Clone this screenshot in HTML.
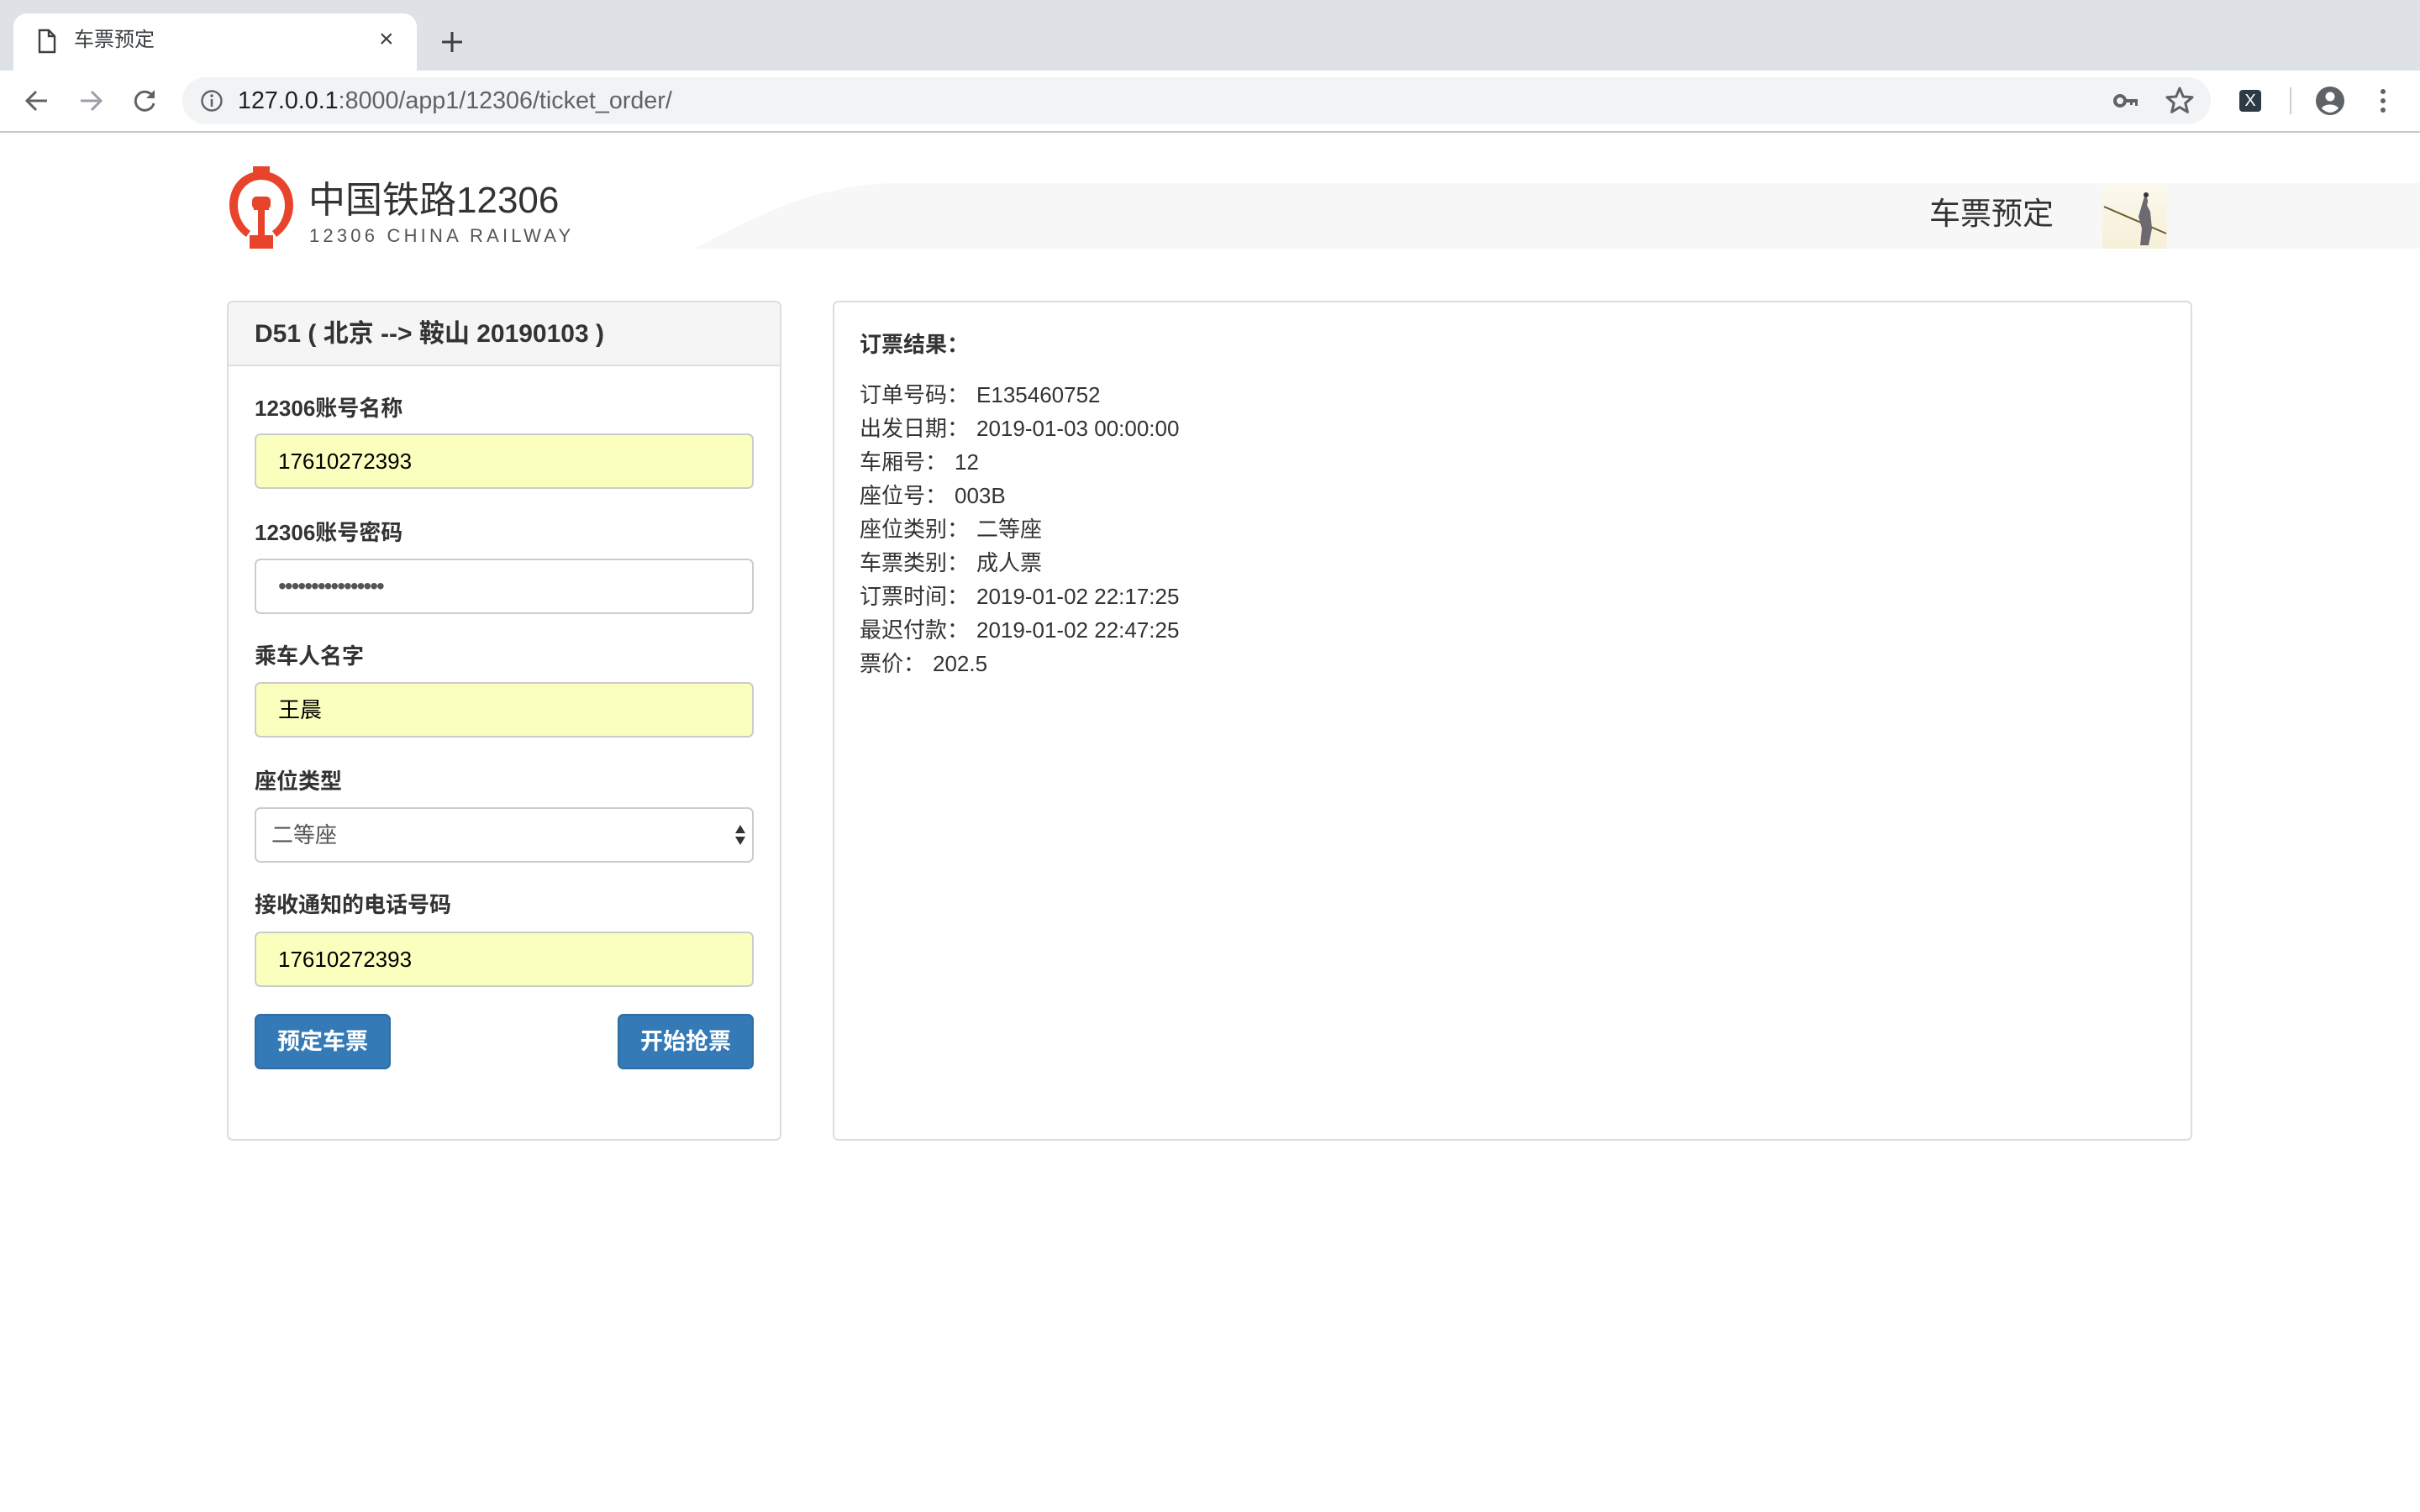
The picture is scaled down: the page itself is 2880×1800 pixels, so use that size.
<!DOCTYPE html>
<html><head><meta charset="utf-8"><style>
*{margin:0;padding:0;box-sizing:border-box}
body{width:2880px;height:1800px;background:#fff;position:relative;overflow:hidden;font-family:"Liberation Sans","Noto Sans CJK SC",sans-serif;color:#333}
.a{position:absolute}
.lbl{position:absolute;left:303px;font-size:26px;font-weight:bold;line-height:36px;color:#333}
.inp{position:absolute;left:303px;width:594px;height:66px;border:2px solid #ccc;border-radius:7px;background:#faffbd;font-size:26px;line-height:62px;padding-left:26px;color:#000}
.btn{position:absolute;top:1207px;width:162px;height:66px;background:#337ab7;border:2px solid #2e6da4;border-radius:7px;color:#fff;font-size:27px;font-weight:bold;line-height:62px;text-align:center}
.row{font-size:26px;line-height:40px;color:#333}
.row span{margin-left:9px}
</style></head><body>
<!-- tab strip -->
<div class="a" style="left:0;top:0;width:2880px;height:84px;background:#dee1e6"></div>
<div class="a" style="left:16px;top:16px;width:480px;height:70px;background:#fff;border-radius:16px 16px 0 0"></div>
<svg class="a" style="left:44px;top:34px" width="24" height="30" viewBox="0 0 24 30"><path d="M3 2h11l7 7v19H3z M14 2v7h7" fill="none" stroke="#3c4043" stroke-width="2.4"/></svg>
<div class="a" style="left:88px;top:32px;font-size:24px;color:#3c4043;line-height:32px">车票预定</div>
<div class="a" style="left:451px;top:30px;font-size:30px;color:#3c4043;line-height:34px">×</div>
<svg class="a" style="left:524px;top:36px" width="28" height="28"><path d="M14 2v24M2 14h24" stroke="#3c4043" stroke-width="3"/></svg>
<!-- toolbar -->
<div class="a" style="left:0;top:156px;width:2880px;height:2px;background:#c8c8c8"></div>
<svg class="a" style="left:28px;top:104px" width="32" height="32" viewBox="0 0 32 32"><path d="M28 16H5M15 5L4 16l11 11" fill="none" stroke="#5f6368" stroke-width="3"/></svg>
<svg class="a" style="left:92px;top:104px" width="32" height="32" viewBox="0 0 32 32"><path d="M4 16h23M17 5l11 11-11 11" fill="none" stroke="#9aa0a6" stroke-width="3"/></svg>
<svg class="a" style="left:156px;top:104px" width="32" height="32" viewBox="0 0 32 32"><path d="M26 11A11 11 0 1 0 27 19" fill="none" stroke="#5f6368" stroke-width="3"/><path d="M28 3v10H18z" fill="#5f6368"/></svg>
<div class="a" style="left:217px;top:92px;width:2414px;height:56px;background:#f1f3f4;border-radius:28px"></div>
<svg class="a" style="left:238px;top:106px" width="28" height="28" viewBox="0 0 28 28"><circle cx="14" cy="14" r="11.5" fill="none" stroke="#5f6368" stroke-width="2.4"/><path d="M14 12v9" stroke="#5f6368" stroke-width="2.6"/><circle cx="14" cy="8" r="1.7" fill="#5f6368"/></svg>
<div class="a" style="left:283px;top:101px;font-size:28.7px;line-height:38px;color:#5f6368"><span style="color:#202124">127.0.0.1</span>:8000/app1/12306/ticket_order/</div>
<svg class="a" style="left:2514px;top:106px" width="32" height="28" viewBox="0 0 32 28"><circle cx="9" cy="14" r="6" fill="none" stroke="#5f6368" stroke-width="4"/><path d="M15 12h15v8h-3v-4h-3v3h-3v-3h-6z" fill="#5f6368"/></svg>
<svg class="a" style="left:2576px;top:102px" width="36" height="34" viewBox="0 0 36 34"><path d="M18 3l4.2 10 10.8.8-8.2 7 2.6 10.6L18 25.6 8.6 31.4l2.6-10.6-8.2-7 10.8-.8z" fill="none" stroke="#5f6368" stroke-width="3" stroke-linejoin="round"/></svg>
<div class="a" style="left:2665px;top:107px;width:26px;height:26px;background:#2d3a43;border-radius:4px;color:#fff;font-size:20px;line-height:26px;text-align:center">X</div>
<div class="a" style="left:2725px;top:104px;width:2px;height:32px;background:#ccc"></div>
<svg class="a" style="left:2755px;top:102px" width="36" height="36" viewBox="0 0 36 36"><circle cx="18" cy="18" r="17" fill="#5f6368"/><circle cx="18" cy="13" r="5.5" fill="#fff"/><path d="M8 27c3-6 17-6 20 0c-3 3-7 5-10 5s-7-2-10-5z" fill="#fff"/></svg>
<svg class="a" style="left:2828px;top:104px" width="16" height="32"><circle cx="8" cy="5" r="3" fill="#5f6368"/><circle cx="8" cy="16" r="3" fill="#5f6368"/><circle cx="8" cy="27" r="3" fill="#5f6368"/></svg>
<!-- header -->
<svg class="a" style="left:0;top:218px" width="2880" height="80"><path d="M826 78C900 40 960 5 1060 0H2880V78Z" fill="#f7f7f7"/></svg>
<svg class="a" style="left:268px;top:198px" width="90" height="98" viewBox="0 0 90 98"><rect x="33" y="0" width="20" height="7" fill="#e8432b"/><path d="M43 6C20 6 5 24 5 46c0 18 10 31 20 38l5-7C20 70 15 58 15 46 15 29 27 16 43 16s28 13 28 30c0 12-5 24-15 31l5 7c10-7 20-20 20-38C81 24 66 6 43 6z" fill="#e8432b"/><path d="M34 38h18v14h-5v30h10v16H29V82h10V52h-5z" fill="#e8432b"/><rect x="32" y="36" width="22" height="15" rx="5" fill="#e8432b"/></svg>
<div class="a" style="left:367px;top:212px;font-size:44px;line-height:54px;color:#333">中国铁路12306</div>
<div class="a" style="left:368px;top:268px;font-size:22px;line-height:26px;color:#555;letter-spacing:4.2px">12306 CHINA RAILWAY</div>
<div class="a" style="left:2296px;top:232px;font-size:37px;line-height:46px;color:#333">车票预定</div>
<div class="a" style="left:2502px;top:218px;width:77px;height:78px;background:linear-gradient(180deg,#fbf8ee,#f6f0d8)"></div>
<svg class="a" style="left:2502px;top:218px" width="77" height="78" viewBox="0 0 77 78"><path d="M2 28L76 60" stroke="#6b5a2a" stroke-width="2"/><path d="M50 16c4 0 5 6 3 10l4 8 2 20-4 20h-10l2-20-4-14 4-14z" fill="#6c6a70"/><circle cx="52" cy="14" r="3" fill="#333"/></svg>
<!-- left panel -->
<div class="a" style="left:270px;top:358px;width:660px;height:1000px;border:2px solid #ddd;border-radius:7px"></div>
<div class="a" style="left:272px;top:360px;width:656px;height:76px;background:#f5f5f5;border-bottom:2px solid #ddd;border-radius:5px 5px 0 0"></div>
<div class="a" style="left:303px;top:378px;font-size:30px;font-weight:bold;line-height:40px;color:#333">D51 ( 北京 --&gt; 鞍山 20190103 )</div>
<div class="lbl" style="top:468px">12306账号名称</div>
<div class="inp" style="top:516px">17610272393</div>
<div class="lbl" style="top:616px">12306账号密码</div>
<div class="inp" style="top:665px;background:#fff;color:#555;font-size:28px;letter-spacing:-2px">••••••••••••••••</div>
<div class="lbl" style="top:763px">乘车人名字</div>
<div class="inp" style="top:812px">王晨</div>
<div class="lbl" style="top:912px">座位类型</div>
<div class="inp" style="top:961px;background:#fff;color:#555;padding-left:18px">二等座</div>
<svg class="a" style="left:874px;top:980px" width="14" height="28"><path d="M7 2l6 10H1z M7 26l6-10H1z" fill="#333"/></svg>
<div class="lbl" style="top:1059px">接收通知的电话号码</div>
<div class="inp" style="top:1109px">17610272393</div>
<div class="btn" style="left:303px">预定车票</div>
<div class="btn" style="left:735px">开始抢票</div>
<!-- right panel -->
<div class="a" style="left:991px;top:358px;width:1618px;height:1000px;border:2px solid #ddd;border-radius:7px"></div>
<div class="a" style="left:1023px;top:390px;font-size:26px;font-weight:bold;line-height:40px">订票结果：</div>
<div class="a" style="left:1023px;top:450px">
<div class="row">订单号码：<span>E135460752</span></div>
<div class="row">出发日期：<span>2019-01-03 00:00:00</span></div>
<div class="row">车厢号：<span>12</span></div>
<div class="row">座位号：<span>003B</span></div>
<div class="row">座位类别：<span>二等座</span></div>
<div class="row">车票类别：<span>成人票</span></div>
<div class="row">订票时间：<span>2019-01-02 22:17:25</span></div>
<div class="row">最迟付款：<span>2019-01-02 22:47:25</span></div>
<div class="row">票价：<span>202.5</span></div>
</div>
</body></html>
